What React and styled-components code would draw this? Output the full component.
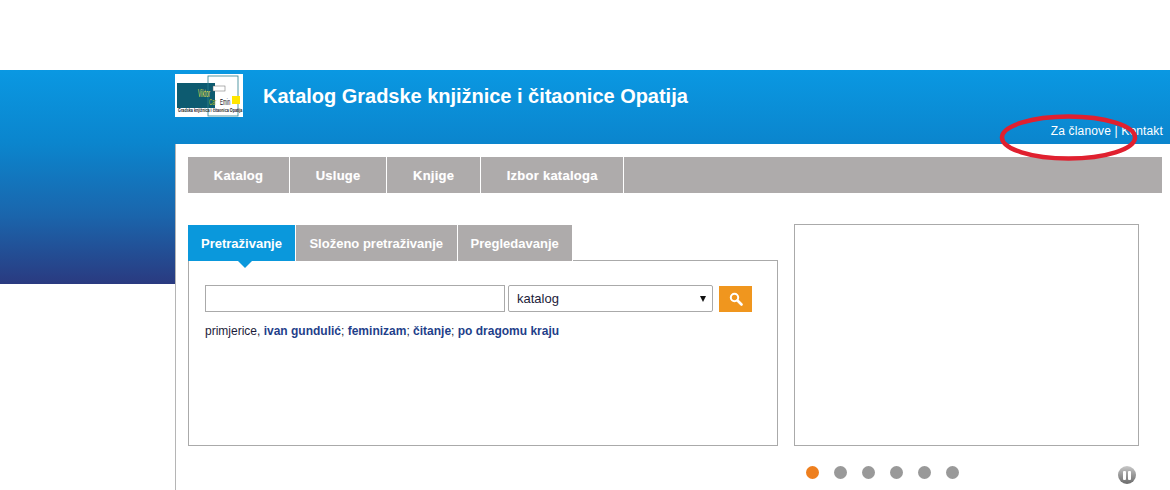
import React from 'react';
import styled, { createGlobalStyle } from 'styled-components';

const GlobalStyle = createGlobalStyle`
  html, body {
    margin: 0;
    padding: 0;
    background: #fff;
    overflow: hidden;
  }
  body {
    font-family: 'Liberation Sans', Arial, sans-serif;
  }
`;

const Page = styled.div`
  position: relative;
  width: 1170px;
  height: 490px;
  padding-top: 70px;
  box-sizing: border-box;
  overflow: hidden;
`;

const Header = styled.header`
  height: 74px;
  box-sizing: border-box;
  padding: 4px 7px 0 175px;
  background: linear-gradient(to bottom, #0a98e2 0%, #0b85cd 100%);
  display: flex;
  flex-direction: column;
`;

const Brand = styled.div`
  display: flex;
  align-items: flex-start;
  gap: 20px;
`;

const LogoBox = styled.svg`
  width: 68px;
  height: 43px;
  display: block;
  flex: none;
`;

const Title = styled.h1`
  margin: 10px 0 0;
  font-size: 20px;
  line-height: 24px;
  font-weight: bold;
  letter-spacing: -0.02px;
  color: #fff;
`;

const TopLinks = styled.div`
  margin-top: 7px;
  text-align: right;
  font-size: 12px;
  line-height: 14px;
  letter-spacing: 0.15px;
  color: #fff;
`;

const Body = styled.div`
  display: flex;
  height: 346px;
`;

const Side = styled.div`
  width: 175px;
  height: 140px;
  flex: none;
  background: linear-gradient(to bottom, #0b85cd 0%, #1a66ad 50%, #2a3a80 100%);
`;

const Main = styled.main`
  flex: 1;
  border-left: 1px solid #b5b5b5;
  padding: 13px 8px 0 12px;
  background: #fff;
`;

const Nav = styled.nav`
  display: flex;
  height: 36px;
  background: #aeabab;
`;

const NavItem = styled.a`
  display: flex;
  align-items: center;
  padding: 0 25.75px;
  border-right: 1px solid #fff;
  font-size: 13px;
  letter-spacing: 0.25px;
  font-weight: bold;
  color: #fff;
  text-shadow: 0 0 1px rgba(255, 255, 255, 0.4);
`;

const Columns = styled.div`
  display: flex;
  align-items: flex-start;
  margin-top: 31px;
`;

const SearchColumn = styled.section`
  width: 590px;
  margin-right: 16px;
  padding-top: 1px;
  flex: none;
`;

const Tabs = styled.div`
  display: flex;
  height: 36px;
`;

const Tab = styled.a`
  position: relative;
  display: flex;
  align-items: center;
  padding: 0 13.5px 0 13px;
  border-right: 1px solid #fff;
  font-size: 13px;
  font-weight: bold;
  color: #fff;
  background: ${(p) => (p.$active ? '#0a98dc' : '#aeabab')};

  ${(p) =>
    p.$active &&
    `
    &::after {
      content: '';
      position: absolute;
      left: 50px;
      top: 36px;
      border-left: 7px solid transparent;
      border-right: 7px solid transparent;
      border-top: 7px solid #0a98dc;
    }
  `}
`;

const Panel = styled.div`
  height: 186px;
  box-sizing: border-box;
  border: 1px solid #aaa;
  margin-top: -1px;
  padding: 24px 16px 0;
`;

const SearchRow = styled.form`
  display: flex;
  align-items: flex-end;
  margin: 0;
`;

const SearchInput = styled.input`
  width: 300px;
  height: 27px;
  box-sizing: border-box;
  border: 1px solid #aaa;
  padding: 0 6px;
  margin: 0 3px 0 0;
  background: #fff;
  outline: none;
`;

const SelectBox = styled.div`
  width: 205px;
  height: 27px;
  box-sizing: border-box;
  border: 1px solid #aaa;
  border-radius: 2px;
  margin-right: 6px;
  padding: 0 5px 0 8px;
  display: flex;
  align-items: center;
  justify-content: space-between;
  font-size: 13px;
  color: #1c1c3a;
`;

const Caret = styled.span`
  width: 0;
  height: 0;
  border-left: 3px solid transparent;
  border-right: 3px solid transparent;
  border-top: 6px solid #111;
  margin-right: 1px;
`;

const SearchButton = styled.button`
  width: 33px;
  height: 26px;
  border: 0;
  padding: 0;
  background: #f0961e;
  display: flex;
  align-items: center;
  justify-content: center;
`;

const Hint = styled.p`
  margin: 12px 0 0;
  font-size: 12px;
  line-height: 14px;
  color: #1c1c3a;
`;

const HintLink = styled.a`
  color: #1f3f8a;
  font-weight: bold;
`;

const SlideColumn = styled.aside`
  width: 345px;
  flex: none;
`;

const SlideBox = styled.div`
  height: 222px;
  box-sizing: border-box;
  border: 1px solid #aaa;
`;

const SlideControls = styled.div`
  display: flex;
  align-items: flex-start;
  justify-content: space-between;
  margin-top: 20px;
  padding: 0 3px 0 12px;
`;

const Dots = styled.div`
  display: flex;
  gap: 15px;
`;

const Dot = styled.span`
  width: 13px;
  height: 13px;
  border-radius: 50%;
  background: ${(p) => (p.$active ? '#ee7f1e' : '#999')};
`;

const PauseButton = styled.span`
  width: 18px;
  height: 18px;
  border-radius: 50%;
  background: linear-gradient(to bottom, #c8c8c8, #6a6a6a);
  display: flex;
  align-items: center;
  justify-content: center;
  gap: 2px;

  &::before,
  &::after {
    content: '';
    width: 3px;
    height: 9px;
    border-radius: 1px;
    background: #fff;
  }
`;

const RedMark = styled.svg`
  position: absolute;
  left: 998px;
  top: 112px;
  width: 142px;
  height: 50px;
  pointer-events: none;
`;

const logoFont = 'Liberation Sans, sans-serif';

function Logo() {
  return (
    <LogoBox viewBox="0 0 68 43">
      <rect width="68" height="43" fill="#fff" />
      <rect x="2" y="9" width="38" height="25" fill="#0d5b70" />
      <rect x="33" y="2" width="30" height="40" fill="none" stroke="#2b7f8f" strokeWidth="0.8" />
      <rect x="57" y="22" width="8" height="8" fill="#ffe600" />
      <rect x="38" y="12" width="12" height="5" fill="#fff" stroke="#666" strokeWidth="0.5" />
      <text transform="translate(23 23) scale(0.6 1.3)" fontSize="8" fill="#e6e04a" fontFamily={logoFont}>Viktor</text>
      <text transform="translate(34 31) scale(0.65 1.3)" fontSize="7" fill="#b9c22e" fontFamily={logoFont}>Car</text>
      <text transform="translate(45 31) scale(0.65 1.3)" fontSize="7" fill="#111" fontFamily={logoFont}>Emin</text>
      <text transform="translate(3 38) scale(1.2 1.5)" fontSize="3.1" fontWeight="bold" fill="#222" fontFamily={logoFont}>Gradska knjižnica i čitaonica Opatija</text>
    </LogoBox>
  );
}

export default function App() {
  return (
    <Page>
      <GlobalStyle />
      <Header>
        <Brand>
          <Logo />
          <Title>Katalog Gradske knjižnice i čitaonice Opatija</Title>
        </Brand>
        <TopLinks>Za članove | Kontakt</TopLinks>
      </Header>
      <Body>
        <Side />
        <Main>
          <Nav>
            <NavItem>Katalog</NavItem>
            <NavItem>Usluge</NavItem>
            <NavItem>Knjige</NavItem>
            <NavItem>Izbor kataloga</NavItem>
          </Nav>
          <Columns>
            <SearchColumn>
              <Tabs>
                <Tab $active>Pretraživanje</Tab>
                <Tab>Složeno pretraživanje</Tab>
                <Tab>Pregledavanje</Tab>
              </Tabs>
              <Panel>
                <SearchRow>
                  <SearchInput type="text" />
                  <SelectBox>
                    katalog
                    <Caret />
                  </SelectBox>
                  <SearchButton type="button" aria-label="Traži">
                    <svg width="14" height="14" viewBox="0 0 14 14" fill="none">
                      <circle cx="5.5" cy="5.5" r="3.7" stroke="#fff" strokeWidth="2" />
                      <path d="M8.5 8.5 L12.5 12.5" stroke="#fff" strokeWidth="2.6" strokeLinecap="round" />
                    </svg>
                  </SearchButton>
                </SearchRow>
                <Hint>
                  primjerice, <HintLink>ivan gundulić</HintLink>; <HintLink>feminizam</HintLink>;{' '}
                  <HintLink>čitanje</HintLink>; <HintLink>po dragomu kraju</HintLink>
                </Hint>
              </Panel>
            </SearchColumn>
            <SlideColumn>
              <SlideBox />
              <SlideControls>
                <Dots>
                  <Dot $active />
                  <Dot />
                  <Dot />
                  <Dot />
                  <Dot />
                  <Dot />
                </Dots>
                <PauseButton />
              </SlideControls>
            </SlideColumn>
          </Columns>
        </Main>
      </Body>
      <RedMark viewBox="0 0 142 50">
        <ellipse cx="70.5" cy="25.5" rx="66.5" ry="21" fill="none" stroke="#e0202f" strokeWidth="4.5" />
      </RedMark>
    </Page>
  );
}
